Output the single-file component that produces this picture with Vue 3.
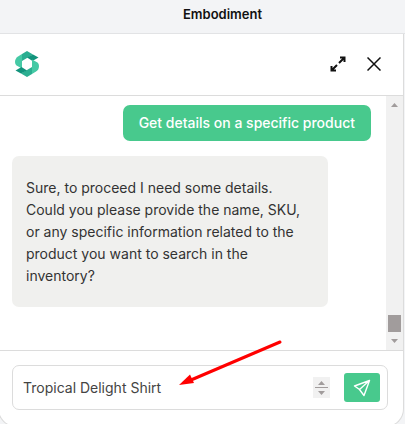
<script setup>
import { ref } from 'vue'

const draft = ref('Tropical Delight Shirt')
const messages = [
  { id: 1, from: 'user', text: 'Get details on a specific product' },
  {
    id: 2,
    from: 'bot',
    text: 'Sure, to proceed I need some details. Could you please provide the name, SKU, or any specific information related to the product you want to search in the inventory?'
  }
]
</script>

<template>
  <div class="page">
    <header class="topbar">
      <h1 class="title">Embodiment</h1>
    </header>
    <main class="panel">
      <div class="panel-head">
        <svg class="logo" viewBox="0 0 24 26" aria-hidden="true">
          <path fill="#45c9a5" d="M7 3 V17.500 L1.500 14.500 Q0 13.500 0 11 Q0 7.500 3 5.500Z" />
          <path fill="#2bae91" d="M7 3 L12 0 L18 3.500 L13 6.500 L12 7 L7 10Z" />
          <path fill="#12937c" d="M18 3.500 L23.500 6.500 L17.500 10 L12 6.500Z" />
          <path fill="#45c9a5" d="M17 23 V8.500 L22.500 11.500 Q24 12.500 24 15 Q24 18.500 21 20.500Z" />
          <path fill="#2bae91" d="M17 23 L12 26 L6 22.500 L11 19.500 L12 19 L17 16Z" />
          <path fill="#12937c" d="M6 22.500 L0.500 19.500 L6.500 16 L12 19.500Z" />
        </svg>
        <div class="actions">
          <button class="icon-button" type="button" aria-label="Expand">
            <svg class="expand" viewBox="0 0 16 16" fill="none" stroke="#111" stroke-width="2">
              <path d="M10 1.500 H14.500 V6 M14.500 1.500 L9 7 M6 14.500 H1.500 V10 M1.500 14.500 L7 9" />
            </svg>
          </button>
          <button class="icon-button" type="button" aria-label="Close">
            <svg class="close" viewBox="0 0 14 14" fill="none" stroke="#111" stroke-width="1.500">
              <path d="M0.500 0.500 L13.500 13.500 M13.500 0.500 L0.500 13.500" />
            </svg>
          </button>
        </div>
      </div>
      <section class="chat">
        <div class="messages">
          <p v-for="m in messages" :key="m.id" class="bubble" :class="m.from">{{ m.text }}</p>
        </div>
        <div class="scrollbar" aria-hidden="true">
          <svg class="arrow" viewBox="0 0 7 4"><path fill="#a19c9c" d="M0 4 L3.500 0 L7 4Z" /></svg>
          <span class="thumb"></span>
          <svg class="arrow" viewBox="0 0 7 4"><path fill="#a19c9c" d="M0 0 L3.500 4 L7 0Z" /></svg>
        </div>
      </section>
      <form class="composer" @submit.prevent>
        <div class="field">
          <input v-model="draft" class="draft" type="text" aria-label="Message" />
          <svg class="stepper" viewBox="0 0 17 21" aria-hidden="true">
            <path fill="#f1f1f1" d="M0 0 H17 V21 H0Z" />
            <path fill="#a19c9c" d="M5 8 L8.500 4 L12 8Z M2 10 H15 V11 H2Z M5 14 L8.500 18 L12 14Z" />
          </svg>
          <button class="send" type="submit" aria-label="Send">
            <svg class="plane" viewBox="0 0 18 18" fill="none" stroke="#fff" stroke-width="1.400" stroke-linejoin="round">
              <path d="M16.500 1.500 L1.500 7 L6.500 10.500 L11 16.500Z M16.500 1.500 L6.500 10.500" />
            </svg>
          </button>
        </div>
        <svg class="pointer" viewBox="0 0 104 50" aria-hidden="true">
          <path d="M101 3 L12 41" stroke="#f00" stroke-width="3" stroke-linecap="round" />
          <path d="M0 46 L11 35.500 L15 44Z" fill="#f00" />
        </svg>
      </form>
    </main>
  </div>
</template>

<style>
body {
  margin: 0;
  background: #f3f4f6;
}
</style>

<style scoped>
.page {
  display: flex;
  flex-direction: column;
  height: 100vh;
  overflow: hidden;
  font-family: Inter, "Liberation Sans", sans-serif;
  color: #333;
}
.topbar {
  padding: 4px 0 9px 40px;
  border-bottom: 1px solid #e2e3e5;
  background: #f3f4f6;
  text-align: center;
}
.title {
  margin: 0;
  font-size: 13px;
  line-height: 20px;
  font-weight: 600;
  color: #111;
}
.panel {
  flex: 1;
  display: flex;
  flex-direction: column;
  min-height: 0;
  margin: 0 1px -3px -2px;
  border: solid #dcdcdc;
  border-width: 0 1px 1px;
  border-radius: 0 0 18px 18px;
  background: #fff;
}
.panel-head {
  display: flex;
  align-items: center;
  justify-content: space-between;
  padding: 17px 22px 18px 16px;
  border-bottom: 1px solid #dcdcdc;
}
.logo {
  width: 24px;
  height: 26px;
}
.actions {
  display: flex;
  align-items: center;
  gap: 21px;
}
.icon-button {
  display: flex;
  padding: 0;
  border: 0;
  background: none;
}
.expand {
  width: 16px;
  height: 16px;
}
.close {
  width: 14px;
  height: 14px;
}
.chat {
  flex: 1;
  display: flex;
  min-height: 0;
}
.messages {
  flex: 1;
  display: flex;
  flex-direction: column;
  gap: 15px;
  padding: 9px 15px 0 13px;
}
.bubble {
  margin: 0;
  border-radius: 7px;
  font-size: 14px;
  line-height: 22px;
}
.user {
  align-self: flex-end;
  padding: 7px 16px;
  background: #48c98d;
  color: #fff;
  font-weight: 500;
}
.bot {
  align-self: flex-start;
  max-width: 288px;
  padding: 21px 14px 20px;
  background: #f0f0ee;
}
.scrollbar {
  display: flex;
  flex-direction: column;
  align-items: center;
  gap: 7px;
  width: 17px;
  padding: 7px 0;
  box-sizing: border-box;
  background: #f1f1f1;
}
.arrow {
  width: 7px;
  height: 4px;
}
.thumb {
  width: 13px;
  height: 17px;
  margin-top: auto;
  background: #a19c9c;
}
.composer {
  position: relative;
  padding: 14px 15px 16px 13px;
  border-top: 1px solid #dcdcdc;
}
.field {
  display: flex;
  align-items: center;
  padding: 7px 7px 7px 10px;
  border: 1px solid #dcdcdc;
  border-radius: 7px;
}
.draft {
  flex: 1;
  min-width: 0;
  padding: 0;
  border: 0;
  outline: 0;
  background: none;
  font-family: inherit;
  font-size: 14px;
  line-height: 22px;
  color: #444;
}
.stepper {
  width: 17px;
  height: 21px;
  margin-right: 14px;
}
.send {
  display: flex;
  align-items: center;
  justify-content: center;
  width: 36px;
  height: 29px;
  padding: 0;
  border: 0;
  border-radius: 3px;
  background: #48c98d;
}
.plane {
  width: 18px;
  height: 18px;
}
.pointer {
  position: absolute;
  right: 120px;
  top: -12px;
  width: 104px;
  height: 50px;
  pointer-events: none;
}
</style>
